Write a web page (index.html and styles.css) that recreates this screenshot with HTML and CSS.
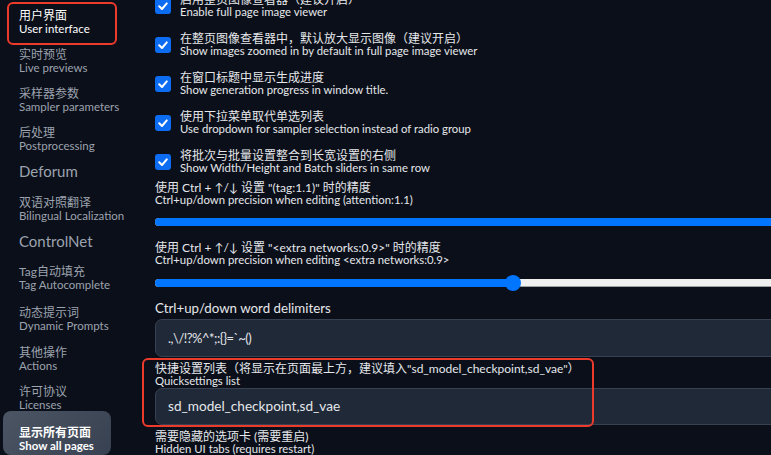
FILE: index.html
```html
<!DOCTYPE html>
<html lang="zh">
<head>
<meta charset="utf-8">
<title>Settings</title>
<link rel="stylesheet" href="styles.css">
</head>
<body>
<div class="page">
  <nav class="sidebar">
    <div class="nav-item active"><span class="zh">用户界面</span><span class="en">User interface</span></div>
    <div class="nav-item"><span class="zh">实时预览</span><span class="en">Live previews</span></div>
    <div class="nav-item"><span class="zh">采样器参数</span><span class="en">Sampler parameters</span></div>
    <div class="nav-item"><span class="zh">后处理</span><span class="en">Postprocessing</span></div>
    <div class="nav-heading deforum">Deforum</div>
    <div class="nav-item bilingual"><span class="zh">双语对照翻译</span><span class="en">Bilingual Localization</span></div>
    <div class="nav-heading controlnet">ControlNet</div>
    <div class="nav-item tag"><span class="zh">Tag自动填充</span><span class="en">Tag Autocomplete</span></div>
    <div class="nav-item dynamic"><span class="zh">动态提示词</span><span class="en">Dynamic Prompts</span></div>
    <div class="nav-item actions"><span class="zh">其他操作</span><span class="en">Actions</span></div>
    <div class="nav-item"><span class="zh">许可协议</span><span class="en">Licenses</span></div>
    <div class="nav-button"><span class="zh">显示所有页面</span><span class="en">Show all pages</span></div>
    <div class="annot annot-nav"></div>
  </nav>
  <main class="content">
    <div class="cb-list">
      <div class="cb-row">
        <span class="cb"><svg viewBox="0 0 16 16" width="16" height="16"><polyline points="4.2,8.3 7,11 11.8,5.4" fill="none" stroke="#fff" stroke-width="2" stroke-linecap="round" stroke-linejoin="round"/></svg></span>
        <div class="lbl"><span class="zh">启用整页图像查看器（建议开启）</span><span class="en">Enable full page image viewer</span></div>
      </div>
      <div class="cb-row">
        <span class="cb"><svg viewBox="0 0 16 16" width="16" height="16"><polyline points="4.2,8.3 7,11 11.8,5.4" fill="none" stroke="#fff" stroke-width="2" stroke-linecap="round" stroke-linejoin="round"/></svg></span>
        <div class="lbl"><span class="zh">在整页图像查看器中，默认放大显示图像（建议开启）</span><span class="en">Show images zoomed in by default in full page image viewer</span></div>
      </div>
      <div class="cb-row">
        <span class="cb"><svg viewBox="0 0 16 16" width="16" height="16"><polyline points="4.2,8.3 7,11 11.8,5.4" fill="none" stroke="#fff" stroke-width="2" stroke-linecap="round" stroke-linejoin="round"/></svg></span>
        <div class="lbl"><span class="zh">在窗口标题中显示生成进度</span><span class="en">Show generation progress in window title.</span></div>
      </div>
      <div class="cb-row">
        <span class="cb"><svg viewBox="0 0 16 16" width="16" height="16"><polyline points="4.2,8.3 7,11 11.8,5.4" fill="none" stroke="#fff" stroke-width="2" stroke-linecap="round" stroke-linejoin="round"/></svg></span>
        <div class="lbl"><span class="zh">使用下拉菜单取代单选列表</span><span class="en">Use dropdown for sampler selection instead of radio group</span></div>
      </div>
      <div class="cb-row">
        <span class="cb"><svg viewBox="0 0 16 16" width="16" height="16"><polyline points="4.2,8.3 7,11 11.8,5.4" fill="none" stroke="#fff" stroke-width="2" stroke-linecap="round" stroke-linejoin="round"/></svg></span>
        <div class="lbl"><span class="zh">将批次与批量设置整合到长宽设置的右侧</span><span class="en">Show Width/Height and Batch sliders in same row</span></div>
      </div>
    </div>

    <div class="lbl slider-label1"><span class="zh">使用 Ctrl + ↑/↓ 设置 "(tag:1.1)" 时的精度</span><span class="en">Ctrl+up/down precision when editing (attention:1.1)</span></div>
    <div class="track track1"><div class="fill" style="width:100%"></div></div>

    <div class="lbl slider-label2"><span class="zh">使用 Ctrl + ↑/↓ 设置 "&lt;extra networks:0.9&gt;" 时的精度</span><span class="en">Ctrl+up/down precision when editing &lt;extra networks:0.9&gt;</span></div>
    <div class="track track2"><div class="fill" style="width:358px"><span class="thumb"></span></div></div>

    <div class="field-label">Ctrl+up/down word delimiters</div>
    <div class="textbox tb1"><span class="symbols">.,\/!?%^*;:{}=`~()</span></div>

    <div class="lbl qs-label"><span class="zh">快捷设置列表（将显示在页面最上方，建议填入"sd_model_checkpoint,sd_vae"）</span><span class="en">Quicksettings list</span></div>
    <div class="textbox tb2">sd_model_checkpoint,sd_vae</div>

    <div class="lbl hide-label"><span class="zh">需要隐藏的选项卡 (需要重启)</span><span class="en">Hidden UI tabs (requires restart)</span></div>

    <div class="annot annot-qs"></div>
  </main>
</div>
</body>
</html>
```
FILE: styles.css
```css
* { box-sizing: border-box; }
html, body {
  margin: 0;
  padding: 0;
  background: #0b0f19;
}
body {
  width: 771px;
  height: 455px;
  overflow: hidden;
  font-family: Lato, "Noto Sans CJK SC", sans-serif;
  color: #e5e7eb;
}
.page {
  display: flex;
  position: relative;
  width: 1000px;
  height: 455px;
}
.zh, .en { display: block; white-space: nowrap; }
.zh { font-size: 12px; }

/* Sidebar */
.sidebar {
  position: relative;
  width: 155px;
  flex: none;
  display: flex;
  flex-direction: column;
  padding-top: 8.5px;
  padding-left: 3px;
}
.nav-item {
  padding-left: 16px;
  color: #9ca3af;
  line-height: 13px;
  margin-top: 13px;
}
.nav-item .en { font-size: 11.5px; }
.nav-item:first-child { margin-top: 0; }
.nav-item.active { color: #ffffff; }
.nav-heading {
  padding-left: 16px;
  color: #9ca3af;
  font-size: 15px;
  line-height: 20px;
  margin-top: 9px;
}
.nav-item.bilingual { margin-top: 15px; }
.nav-heading.controlnet { margin-top: 9.5px; }
.nav-item.tag { margin-top: 14px; }
.nav-item.dynamic { margin-top: 15px; }
.nav-item.actions { margin-top: 13.5px; }
.nav-button {
  margin-top: 0.5px;
  width: 108px;
  height: 60px;
  padding: 15px 0 0 16px;
  border-radius: 8px;
  background: linear-gradient(135deg, #4b5563 0%, #374151 100%);
  color: #ffffff;
  font-weight: 700;
  line-height: 13px;
}
.nav-button .en { font-size: 11.5px; }

/* Annotations */
.annot {
  position: absolute;
  border: 2px solid #ec3a2b;
  border-radius: 6px;
}
.annot-nav { left: 7px; top: 2px; width: 110px; height: 43px; }
.annot-qs { left: -13px; top: 358px; width: 452px; height: 69px; }

/* Main content */
.content {
  position: relative;
  flex: 1;
  display: flex;
  flex-direction: column;
}
.lbl {
  line-height: 12px;
}
.lbl .en { font-size: 11.35px; }
.cb-list {
  display: flex;
  flex-direction: column;
  gap: 15px;
  margin-top: -6px;
}
.cb-row {
  display: flex;
  align-items: center;
  gap: 9px;
}
.cb {
  width: 16px;
  height: 16px;
  border-radius: 3px;
  background: #0d6df2;
  display: flex;
  flex: none;
}
.slider-label1 { margin-top: 8px; }
.slider-label2 { margin-top: 16px; }
.track {
  height: 8px;
  border-radius: 4px;
  background: #efefef;
  box-shadow: inset 0 -1px 0 #9e9e9e;
}
.track1 { margin-top: 12px; }
.track2 { margin-top: 13px; }
.fill {
  position: relative;
  height: 8px;
  border-radius: 4px;
  background: #0075ff;
}
.thumb {
  position: absolute;
  right: -8px;
  top: -4px;
  width: 16px;
  height: 16px;
  border-radius: 50%;
  background: #0075ff;
}
.field-label {
  margin-top: 13px;
  font-size: 13.3px;
  line-height: 16px;
}
.textbox {
  height: 41px;
  background: #1f2937;
  border: 1px solid #374151;
  border-radius: 7px;
  padding-left: 12px;
  display: flex;
  align-items: center;
  font-size: 13.6px;
  color: #e5e7eb;
}
.symbols { font-size: 13px; letter-spacing: -0.5px; }
.tb1 { margin-top: 3px; }
.qs-label { margin-top: 6px; }
.tb2 { margin-top: 1px; }
.hide-label { margin-top: 6px; }
```
